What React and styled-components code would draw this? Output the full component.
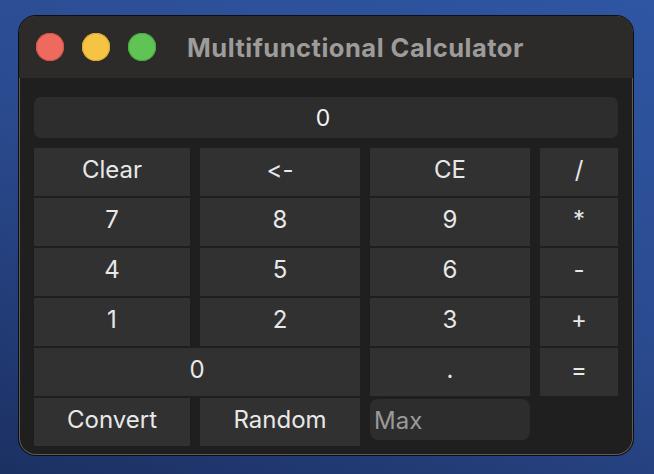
import styled, { createGlobalStyle } from "styled-components";

const GlobalStyle = createGlobalStyle`
    html, body {
        margin: 0;
        padding: 0;
        width: 654px;
        height: 474px;
        overflow: hidden;
    }
    body {
        background: linear-gradient(200deg, #2f56a3 0%, #2a4a8e 50%, #1c3062 100%);
        font-family: Inter, "Liberation Sans", sans-serif;
        font-variant-ligatures: none;
        font-feature-settings: "calt" 0, "liga" 0;
    }
`;

const Desktop = styled.div`
    width: 654px;
    height: 474px;
    padding: 16px 21px 19px 19px;
    box-sizing: border-box;
`;

const Window = styled.div`
    width: 614px;
    height: 439px;
    border-radius: 17px;
    background: #1f1f1f;
    box-shadow: 0 0 0 1px #0e0e0e, inset 0 0 0 1px #5c5c5c;
    overflow: hidden;
    display: flex;
    flex-direction: column;
`;

const TitleBar = styled.div`
    height: 62px;
    flex-shrink: 0;
    background: #2c2b2a;
    display: flex;
    align-items: center;
    padding-left: 17px;
    gap: 18px;
`;

const Light = styled.span`
    width: 28px;
    height: 28px;
    border-radius: 50%;
    background: ${(p) => p.$color};
    box-shadow: inset 0 0 0 1px ${(p) => p.$edge};
`;

const Title = styled.div`
    margin-left: 13px;
    margin-top: 1px;
    color: #9d9c9a;
    font-size: 25.5px;
    font-weight: 700;
    letter-spacing: 0.5px;
`;

const Body = styled.div`
    flex: 1;
    padding: 19px 15px 9px 15px;
    display: flex;
    flex-direction: column;
    gap: 10px;
`;

const Display = styled.div`
    height: 41px;
    border-radius: 7px;
    background: #2d2d2d;
    color: #f2f2f2;
    font-size: 23px;
    display: flex;
    align-items: center;
    justify-content: center;
    padding-right: 6px;
`;

const Keypad = styled.div`
    display: grid;
    grid-template-columns: 156px 160px 160px 78px;
    grid-auto-rows: 48px;
    column-gap: 10px;
    row-gap: 2px;
`;

const Key = styled.div`
    grid-column: ${(p) => p.$span || "auto"};
    background: #313131;
    color: #e8e8e8;
    font-size: 24px;
    display: flex;
    align-items: center;
    justify-content: center;
    padding-bottom: 5px;
    box-sizing: border-box;
`;

const MaxInput = styled.div`
    margin: 1px 0 6px 0;
    border-radius: 8px;
    background: #2d2d2d;
    color: #9a9a9a;
    font-size: 24px;
    display: flex;
    align-items: center;
    padding-left: 4px;
    padding-top: 2px;
`;

const keys = [
    ["Clear"], ["<-"], ["CE"], ["/"],
    ["7"], ["8"], ["9"], ["*"],
    ["4"], ["5"], ["6"], ["-"],
    ["1"], ["2"], ["3"], ["+"],
    ["0", "span 2"], ["."], ["="],
    ["Convert"], ["Random"],
];

export default function App() {
    return (
        <>
            <GlobalStyle />
            <Desktop>
                <Window>
                    <TitleBar>
                        <Light $color="#ee6a5f" $edge="#d2554b" />
                        <Light $color="#f5c444" $edge="#d9a933" />
                        <Light $color="#5fc454" $edge="#49a83f" />
                        <Title>Multifunctional Calculator</Title>
                    </TitleBar>
                    <Body>
                        <Display>0</Display>
                        <Keypad>
                            {keys.map(([label, span], i) => (
                                <Key key={i} $span={span}>
                                    {label}
                                </Key>
                            ))}
                            <MaxInput>Max</MaxInput>
                        </Keypad>
                    </Body>
                </Window>
            </Desktop>
        </>
    );
}
